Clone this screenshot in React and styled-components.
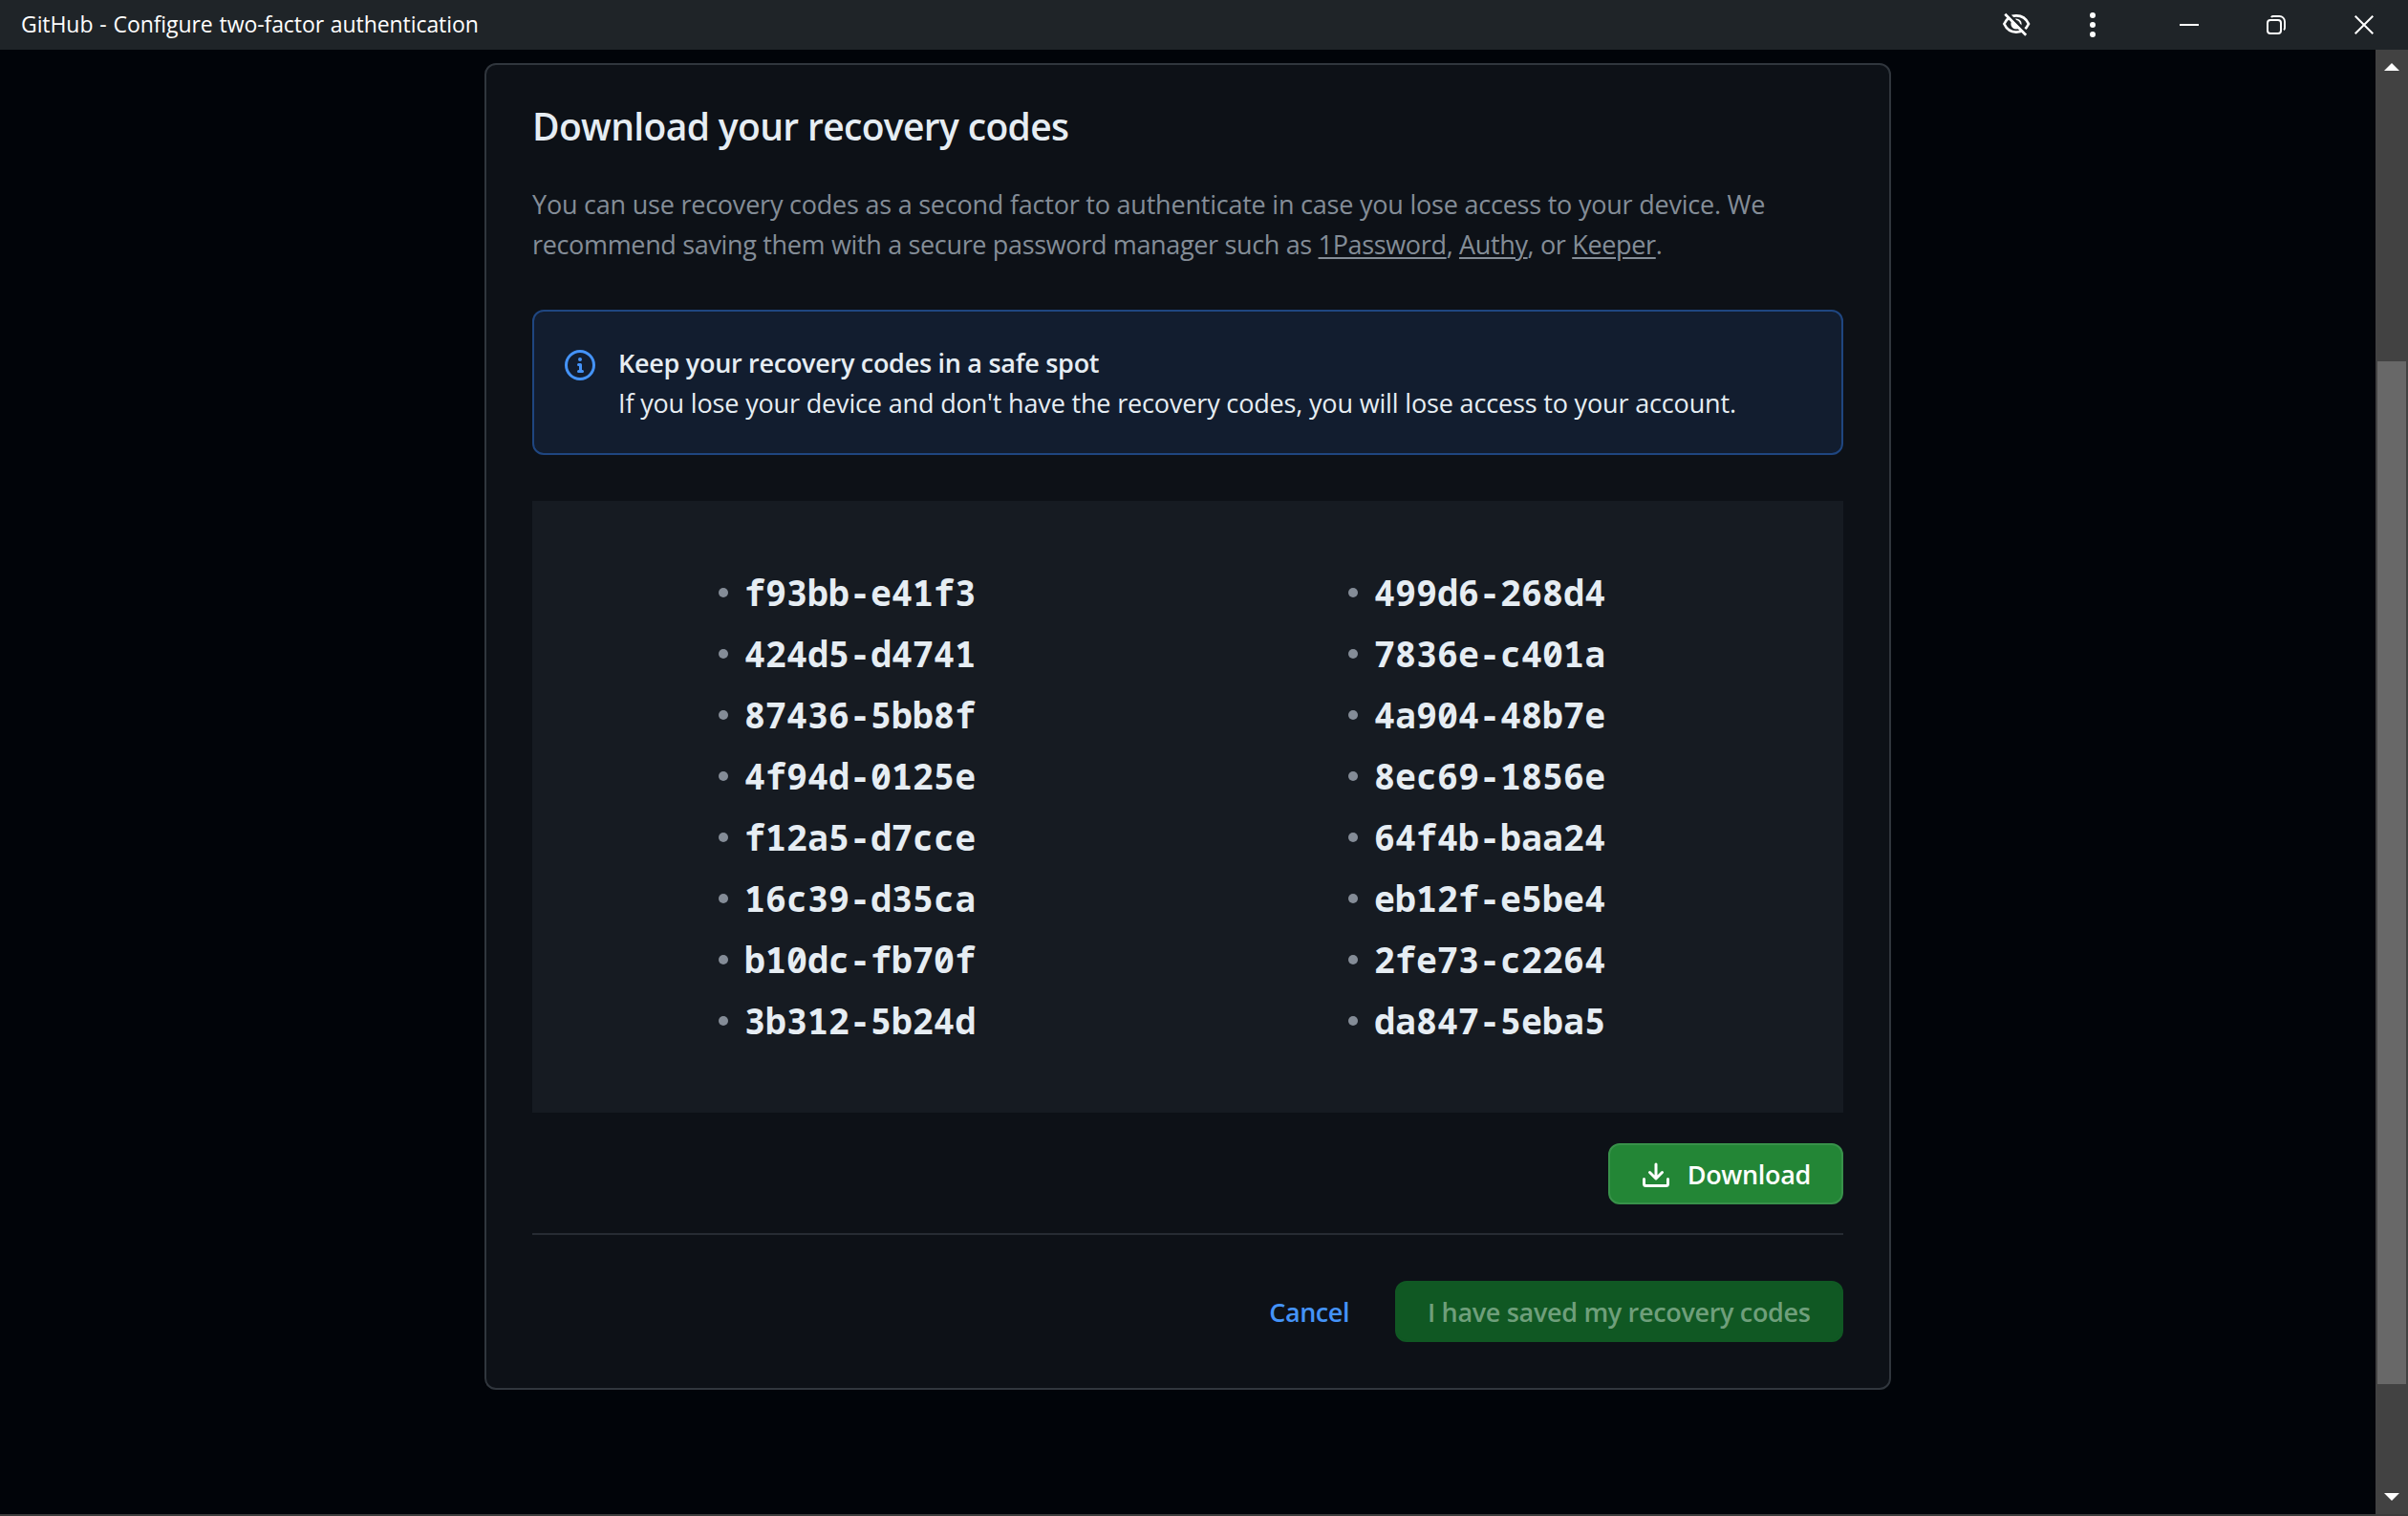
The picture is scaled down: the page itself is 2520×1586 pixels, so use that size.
import React from 'react';
import styled, { createGlobalStyle } from 'styled-components';

const GlobalStyle = createGlobalStyle`
  *, *::before, *::after { box-sizing: border-box; }
  html, body { height: 100%; }
  body {
    margin: 0;
    overflow: hidden;
    background: #010409;
    color: #e6edf3;
    font-family: "Open Sans", "Noto Sans", sans-serif;
    font-size: 27px;
    line-height: 42px;
  }
`;

const Window = styled.div`
  display: flex;
  flex-direction: column;
  height: 100vh;
  border-bottom: 2px solid #3c3c3c;
`;

const TitleBar = styled.header`
  display: flex;
  flex: none;
  align-items: center;
  justify-content: space-between;
  height: 52px;
  padding: 0 36px 0 22px;
  background: #1f2428;
  color: #fff;
`;

const WindowTitle = styled.span`
  padding-bottom: 2px;
  font-size: 23px;
  line-height: 50px;
  letter-spacing: -0.08px;
  word-spacing: 1px;
`;

const WindowControls = styled.div`
  display: flex;
  align-items: center;
  svg { display: block; }
`;

const Control = styled.span`
  display: flex;
  margin-left: ${(p) => p.$gap}px;
`;

const Body = styled.div`
  display: flex;
  flex: 1;
  min-height: 0;
`;

const Page = styled.main`
  flex: 1;
  padding-top: 14px;
`;

const Card = styled.section`
  width: 1472px;
  height: 1388px;
  margin: 0 auto;
  padding: 34px 48px 0;
  border: 2px solid #30363d;
  border-radius: 12px;
  background: #0d1117;
`;

const Heading = styled.h1`
  margin: 0 0 31px;
  font-size: 39px;
  font-weight: 600;
  line-height: 60px;
  letter-spacing: -0.65px;
`;

const Intro = styled.p`
  margin: 0 0 47px;
  color: #848d97;
`;

const IntroLine = styled.span`
  display: block;
  letter-spacing: ${(p) => p.$tracking}px;
  white-space: nowrap;
`;

const Link = styled.a`
  color: inherit;
  text-decoration: underline;
  text-decoration-thickness: 2px;
  text-underline-offset: 3px;
  text-decoration-skip-ink: auto;
`;

const Alert = styled.div`
  display: flex;
  gap: 24px;
  height: 152px;
  margin-bottom: 48px;
  padding: 33px 32px 0;
  border: 2px solid #1f4680;
  border-radius: 12px;
  background: #121d2f;
  letter-spacing: -0.16px;
  svg { flex: none; margin-top: 7px; color: #4493f8; }
`;

const AlertTitle = styled.strong`
  display: block;
  font-weight: 600;
  letter-spacing: -0.28px;
`;

const CodePanel = styled.div`
  display: grid;
  grid-template-columns: 659px 1fr;
  height: 640px;
  padding: 64px 0 0 195px;
  background: #161b22;
`;

const CodeList = styled.ul`
  margin: 0;
  padding: 0;
  list-style: none;
`;

const Code = styled.li`
  display: flex;
  align-items: center;
  gap: 17px;
  height: 64px;
  font-family: "Noto Sans Mono", "DejaVu Sans Mono", monospace;
  font-size: 36.7px;
  font-weight: 700;
  line-height: 64px;
  &::before {
    content: "";
    width: 10px;
    height: 10px;
    border-radius: 50%;
    background: #848c97;
  }
`;

const Actions = styled.div`
  display: flex;
  align-items: center;
  justify-content: flex-end;
  padding: ${(p) => p.$pad};
  border-bottom: ${(p) => (p.$divided ? '2px solid #262b33' : '0')};
`;

const Button = styled.button`
  display: flex;
  align-items: center;
  justify-content: space-between;
  width: ${(p) => p.$width}px;
  height: 64px;
  padding: 2px 32px 0;
  border: 2px solid ${(p) => (p.disabled ? '#105823' : '#38924a')};
  border-radius: 12px;
  background: ${(p) => (p.disabled ? '#105823' : '#238636')};
  color: ${(p) => (p.disabled ? '#6f9f7b' : '#fff')};
  font: 600 27px/42px "Open Sans", "Noto Sans", sans-serif;
  letter-spacing: -0.33px;
  white-space: nowrap;
  svg { margin-top: 1px; }
`;

const CancelLink = styled.a`
  margin: 2px 48px 0 0;
  color: #4493f8;
  font-weight: 600;
  letter-spacing: -0.45px;
`;

const ScrollTrack = styled.div`
  display: flex;
  flex: none;
  flex-direction: column;
  align-items: center;
  width: 34px;
  background: #424242;
`;

const ScrollArrow = styled.svg`
  display: block;
  flex: none;
  margin: ${(p) => p.$margin};
`;

const ScrollThumb = styled.div`
  width: 30px;
  height: 1070px;
  margin-bottom: auto;
  background: #686868;
`;

const HiddenEye = () => (
  <svg width="30" height="26" viewBox="0 0 30 26" fill="none" stroke="#fff">
    <mask id="eye-gap" maskUnits="userSpaceOnUse" x="0" y="0" width="30" height="26">
      <rect width="30" height="26" fill="#fff" stroke="none" />
      <path d="M4 -2.4L30 23.6" stroke="#000" strokeWidth="3.2" transform="translate(-.5 .9)" />
    </mask>
    <g mask="url(#eye-gap)">
      <path d="M2.4 12C5 6.4 9.8 3.4 15 3.4S25.4 6.4 28 12C25.4 17.6 20.2 20.6 15 20.6S5 17.6 2.4 12Z" strokeWidth="2.7" />
      <circle cx="15" cy="12" r="5.6" fill="#fff" stroke="none" />
    </g>
    <path d="M15.6 8.6A3.6 3.6 0 0 1 18.4 11.4" stroke="#1f2428" strokeWidth="1" />
    <path d="M3.3 1.8L25.2 23.7" strokeWidth="2.7" />
  </svg>
);

const Dots = () => (
  <svg width="6" height="26" viewBox="0 0 6 26" fill="#fff">
    <circle cx="3" cy="3" r="3" />
    <circle cx="3" cy="13" r="3" />
    <circle cx="3" cy="23" r="3" />
  </svg>
);

const Minimize = () => (
  <svg width="20" height="2"><rect width="20" height="2" fill="#fff" /></svg>
);

const Restore = () => (
  <svg width="20" height="20" viewBox="0 0 20 20" fill="none" stroke="#fff" strokeWidth="2">
    <rect x="1" y="5" width="14" height="14" rx="3" />
    <path d="M4.8 2C5.4 1.3 6.2 1 7 1H13.5A5.5 5.5 0 0 1 19 6.5V13C19 14 18.6 14.8 18 15.3" strokeWidth="1.9" />
  </svg>
);

const Close = () => (
  <svg width="20" height="20" viewBox="0 0 20 20" stroke="#fff" strokeWidth="2">
    <path d="M.7.7L19.3 19.3M19.3.7L.7 19.3" />
  </svg>
);

const InfoIcon = () => (
  <svg width="32" height="32" viewBox="0 0 16 16" fill="currentColor">
    <path d="M0 8a8 8 0 1 1 16 0A8 8 0 0 1 0 8Zm8-6.5a6.5 6.5 0 1 0 0 13 6.5 6.5 0 0 0 0-13ZM6.5 7.75A.75.75 0 0 1 7.25 7h1a.75.75 0 0 1 .75.75v2.75h.25a.75.75 0 0 1 0 1.5h-2a.75.75 0 0 1 0-1.5h.25v-2h-.25a.75.75 0 0 1-.75-.75ZM8 6a1 1 0 1 1 0-2 1 1 0 0 1 0 2Z" />
  </svg>
);

const DownloadIcon = () => (
  <svg width="32" height="32" viewBox="0 0 16 16" fill="currentColor">
    <path d="M2.75 14A1.75 1.75 0 0 1 1 12.25v-2.5a.75.75 0 0 1 1.5 0v2.5c0 .138.112.25.25.25h10.5a.25.25 0 0 0 .25-.25v-2.5a.75.75 0 0 1 1.5 0v2.5A1.75 1.75 0 0 1 13.25 14Z" />
    <path d="M7.25 7.689V2a.75.75 0 0 1 1.5 0v5.689l1.97-1.969a.749.749 0 1 1 1.06 1.06l-3.25 3.25a.749.749 0 0 1-1.06 0L4.22 6.78a.749.749 0 1 1 1.06-1.06l1.97 1.969Z" />
  </svg>
);

const codeColumns = [
  ['f93bb-e41f3', '424d5-d4741', '87436-5bb8f', '4f94d-0125e', 'f12a5-d7cce', '16c39-d35ca', 'b10dc-fb70f', '3b312-5b24d'],
  ['499d6-268d4', '7836e-c401a', '4a904-48b7e', '8ec69-1856e', '64f4b-baa24', 'eb12f-e5be4', '2fe73-c2264', 'da847-5eba5'],
];

export default function App() {
  return (
    <Window>
      <GlobalStyle />
      <TitleBar>
        <WindowTitle>GitHub - Configure two-factor authentication</WindowTitle>
        <WindowControls>
          <Control $gap={0}><HiddenEye /></Control>
          <Control $gap={62}><Dots /></Control>
          <Control $gap={88}><Minimize /></Control>
          <Control $gap={71}><Restore /></Control>
          <Control $gap={72}><Close /></Control>
        </WindowControls>
      </TitleBar>
      <Body>
        <Page>
          <Card>
            <Heading>Download your recovery codes</Heading>
            <Intro>
              <IntroLine $tracking={-0.22}>
                You can use recovery codes as a second factor to authenticate in case you lose access to your device. We
              </IntroLine>
              <IntroLine $tracking={-0.34}>
                recommend saving them with a secure password manager such as <Link>1Password</Link>, <Link>Authy</Link>, or <Link>Keeper</Link>.
              </IntroLine>
            </Intro>
            <Alert>
              <InfoIcon />
              <div>
                <AlertTitle>Keep your recovery codes in a safe spot</AlertTitle>
                If you lose your device and don't have the recovery codes, you will lose access to your account.
              </div>
            </Alert>
            <CodePanel>
              {codeColumns.map((codes) => (
                <CodeList key={codes[0]}>
                  {codes.map((code) => <Code key={code}>{code}</Code>)}
                </CodeList>
              ))}
            </CodePanel>
            <Actions $pad="32px 0 30px" $divided>
              <Button $width={246}><DownloadIcon />Download</Button>
            </Actions>
            <Actions $pad="48px 0 0">
              <CancelLink>Cancel</CancelLink>
              <Button $width={469} disabled>I have saved my recovery codes</Button>
            </Actions>
          </Card>
        </Page>
        <ScrollTrack>
          <ScrollArrow $margin="14px 0 304px" width="16" height="8"><path d="M8 0L16 8H0Z" fill="#fff" /></ScrollArrow>
          <ScrollThumb />
          <ScrollArrow $margin="0 0 14px" width="16" height="8"><path d="M0 0H16L8 8Z" fill="#fff" /></ScrollArrow>
        </ScrollTrack>
      </Body>
    </Window>
  );
}
